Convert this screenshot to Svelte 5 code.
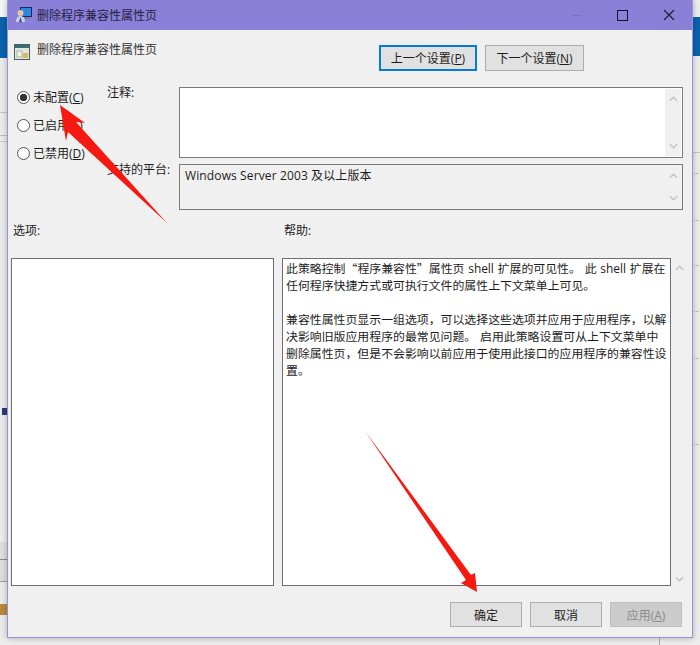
<script>
  let setting = 'none';

  const radios = [
    { id: 'none', text: '未配置', key: 'C' },
    { id: 'on', text: '已启用', key: 'E' },
    { id: 'off', text: '已禁用', key: 'D' }
  ];

  // the dotted rows of the list behind the dialog
  const dotRows = [173, 220, 265, 311, 358, 444];
</script>

<div class="desktop">
  <!-- bits of the windows behind the dialog -->
  <div class="behind top-left"></div>
  <div class="behind blue-left"></div>
  <div class="behind line-a"></div>
  <div class="behind line-d"></div>
  <div class="behind line-e"></div>
  <div class="behind band"></div>
  <div class="behind line-b"></div>
  <div class="behind line-c"></div>
  <div class="behind blue-right"></div>
  <div class="behind line-r"></div>
  {#each dotRows as y}
    <div class="behind dots" style="top: {y}px"></div>
  {/each}
  <div class="behind bottom-line"></div>
  <div class="behind mini-a"></div>
  <div class="behind mini-b"></div>

  <div class="window">
    <div class="titlebar">
      <svg class="title-icon" width="16" height="16" viewBox="0 0 16 16">
        <rect x="4" y="0" width="12" height="10" fill="#1b2a5e" />
        <rect x="5" y="1" width="10" height="8" fill="#2f86de" />
        <rect x="8" y="10" width="6" height="2" fill="#6f7f9c" />
        <circle cx="4.5" cy="6" r="3" fill="#e6c6a0" />
        <path d="M0 15c0-4 2-6 4.500-6s4.500 2 4.500 6z" fill="#c9d2e8" />
        <path d="M3 15l1.500-5 1.500 5z" fill="#2c4f9c" />
      </svg>
      <span class="title-text">删除程序兼容性属性页</span>
      <div class="controls">
        <span class="min"></span>
        <span class="max"></span>
        <svg width="12" height="12" viewBox="0 0 12 12">
          <path d="M1 1l10 10M11 1L1 11" stroke="#1c1c30" stroke-width="1.2" fill="none" />
        </svg>
      </div>
    </div>

    <div class="head">
      <svg class="head-icon" width="16" height="16" viewBox="0 0 16 16">
        <rect x="0.5" y="0.5" width="15" height="15" fill="#dfe6e4" stroke="#4d5c5c" />
        <rect x="1" y="1" width="14" height="3" fill="#3c6f73" />
        <rect x="3" y="7" width="5" height="6" fill="#f1efe0" stroke="#8b8f7a" stroke-width="0.6" />
        <rect x="9" y="9" width="5" height="5" fill="#d9b95f" />
      </svg>
      <span class="head-text">删除程序兼容性属性页</span>
      <div class="nav">
        <button class="btn focus">上一个设置(<u>P</u>)</button>
        <button class="btn">下一个设置(<u>N</u>)</button>
      </div>
    </div>

    <div class="config">
      <div class="radios">
        {#each radios as r}
          <label class="radio">
            <input type="radio" bind:group={setting} value={r.id} />
            <span class="dot"></span>
            <span>{r.text}(<u>{r.key}</u>)</span>
          </label>
        {/each}
      </div>
      <span class="field-label">注释:</span>
      <div class="box comment">
        <div class="scroll">
          <svg class="chev" viewBox="0 0 10 6"><path d="M1 5l4-4 4 4" /></svg>
          <svg class="chev" viewBox="0 0 10 6"><path d="M1 1l4 4 4-4" /></svg>
        </div>
      </div>
      <span class="field-label">支持的平台:</span>
      <div class="box platform">
        <p>Windows Server 2003 及以上版本</p>
        <div class="scroll">
          <svg class="chev" viewBox="0 0 10 6"><path d="M1 5l4-4 4 4" /></svg>
          <svg class="chev" viewBox="0 0 10 6"><path d="M1 1l4 4 4-4" /></svg>
        </div>
      </div>
    </div>

    <div class="pane-labels">
      <span>选项:</span>
      <span>帮助:</span>
    </div>

    <div class="panes">
      <div class="pane options"></div>
      <div class="pane help">
        <p>此策略控制<span class="quote">“</span>程序兼容性<span class="quote">”</span>属性页 shell 扩展的可见性。 此 shell 扩展在<br />任何程序快捷方式或可执行文件的属性上下文菜单上可见。</p>
        <p>兼容性属性页显示一组选项，可以选择这些选项并应用于应用程序，以解<br />决影响旧版应用程序的最常见问题。 启用此策略设置可从上下文菜单中<br />删除属性页，但是不会影响以前应用于使用此接口的应用程序的兼容性设<br />置。</p>
      </div>
      <div class="help-scroll">
        <svg class="chev" viewBox="0 0 10 6"><path d="M1 5l4-4 4 4" /></svg>
        <svg class="chev" viewBox="0 0 10 6"><path d="M1 1l4 4 4-4" /></svg>
      </div>
    </div>

    <div class="footer">
      <button class="btn wide">确定</button>
      <button class="btn wide">取消</button>
      <button class="btn wide disabled" disabled>应用(<u>A</u>)</button>
    </div>
  </div>

  <!-- red annotation arrows on top of the screenshot -->
  <svg class="arrows" width="700" height="645" viewBox="0 0 700 645">
    <path d="M60 105L85 123L76 122L167 223L68 132L66 141z" fill="#f5190f" />
    <path d="M365 431L471 575L475 573L477 592L461 583L466 580z" fill="#f5190f" />
  </svg>
</div>

<style>
  :global(body) {
    margin: 0;
    background: #f0f0f0;
  }

  .desktop {
    position: relative;
    width: 700px;
    height: 645px;
    padding-left: 7px;
    box-sizing: border-box;
    overflow: hidden;
    background: #ececec;
    font-family: "Open Sans", "Noto Sans CJK SC", sans-serif;
    font-size: 12px;
    color: #1c1c1c;
  }

  .behind {
    position: absolute;
  }

  .top-left {
    left: 0;
    top: 0;
    width: 7px;
    height: 17px;
    background: #f6f6f6;
  }

  .blue-left {
    left: 0;
    top: 17px;
    width: 7px;
    height: 41px;
    background: #0a64ad;
  }

  .blue-right {
    left: 693px;
    top: 17px;
    width: 7px;
    height: 39px;
    background: #0a64ad;
  }

  .line-r {
    left: 693px;
    top: 152px;
    width: 7px;
    height: 1px;
    background: #c4c4c4;
  }

  .dots {
    left: 694px;
    width: 6px;
    height: 1px;
    background: repeating-linear-gradient(90deg, #a8a8a8 0 1px, transparent 1px 2px);
  }

  .line-a {
    left: 0;
    top: 112px;
    width: 7px;
    height: 1px;
    background: #c4c4c4;
  }

  .line-d {
    left: 0;
    top: 135px;
    width: 7px;
    height: 1px;
    background: #bcbcbc;
  }

  .line-e {
    left: 0;
    top: 141px;
    width: 7px;
    height: 1px;
    background: #c8c8c8;
  }

  .band {
    left: 0;
    top: 542px;
    width: 7px;
    height: 39px;
    background: #dedede;
  }

  .line-b {
    left: 0;
    top: 559px;
    width: 7px;
    height: 1px;
    background: #8a8a8a;
  }

  .line-c {
    left: 0;
    top: 581px;
    width: 7px;
    height: 1px;
    background: #a0a0a0;
  }

  .bottom-line {
    left: 659px;
    top: 637px;
    width: 1px;
    height: 8px;
    background: #a8a8a8;
  }

  .mini-a {
    left: 2px;
    top: 408px;
    width: 5px;
    height: 7px;
    background: #2d3c78;
  }

  .mini-b {
    left: 0;
    top: 604px;
    width: 7px;
    height: 11px;
    background: #b98a3c;
  }

  .window {
    position: relative;
    width: 686px;
    height: 638px;
    box-sizing: border-box;
    border: 1px solid #9a92dc;
    border-top: 0;
    background: #f0f0f0;
    box-shadow: 0 0 6px rgba(0, 0, 0, 0.28);
    display: flex;
    flex-direction: column;
  }

  .titlebar {
    height: 30px;
    flex: none;
    background: #8a80d8;
    display: flex;
    align-items: center;
    padding-left: 8px;
    gap: 5px;
  }

  .title-text {
    color: #23233f;
    font-size: 12px;
  }

  .controls {
    margin-left: auto;
    display: flex;
    align-items: center;
    gap: 35px;
    padding-right: 17px;
  }

  .min {
    width: 10px;
    height: 1px;
    background: #7a72bd;
  }

  .max {
    width: 9px;
    height: 9px;
    border: 1px solid #12122a;
  }

  .head {
    height: 57px;
    flex: none;
    display: flex;
    align-items: flex-start;
    padding-left: 6px;
    padding-right: 108px;
  }

  .head-icon {
    margin-top: 14px;
  }

  .head-text {
    margin-left: 7px;
    margin-top: 11px;
    line-height: 17px;
    color: #333;
  }

  .nav {
    margin-left: auto;
    margin-top: 15px;
    display: flex;
    gap: 8px;
  }

  .btn {
    width: 99px;
    height: 26px;
    padding: 0;
    box-sizing: border-box;
    border: 1px solid #adadad;
    background: #e1e1e1;
    font: inherit;
    color: #1c1c1c;
  }

  .btn.focus {
    width: 98px;
    border: 2px solid #0a78d7;
  }

  .btn.wide {
    width: 72px;
    height: 25px;
  }

  .btn.disabled {
    background: #cccccc;
    border-color: #bfbfbf;
    color: #8a8a8a;
  }

  .config {
    flex: none;
    display: grid;
    grid-template-columns: 90px 72px 504px;
    grid-template-rows: 71px 46px;
    row-gap: 6px;
    padding-left: 9px;
  }

  .radios {
    grid-row: 1 / 3;
    grid-column: 1;
    display: flex;
    flex-direction: column;
    gap: 11px;
    padding-top: 2px;
  }

  .radio {
    display: flex;
    align-items: center;
    gap: 3px;
    height: 17px;
    line-height: 17px;
  }

  .radio input {
    display: none;
  }

  .dot {
    width: 13px;
    height: 13px;
    box-sizing: border-box;
    border: 1px solid #555;
    border-radius: 50%;
    background: #fff;
    flex: none;
  }

  .radio input:checked + .dot {
    background: radial-gradient(circle, #333 0 3.4px, #fff 4px);
  }

  .field-label {
    grid-column: 2;
    margin-top: -3px;
    line-height: 17px;
  }

  .box {
    grid-column: 3;
    box-sizing: border-box;
    border: 1px solid #7a7a7a;
    position: relative;
    display: flex;
    justify-content: flex-end;
  }

  .comment {
    background: #fff;
  }

  .platform {
    background: #f0f0f0;
  }

  .platform p {
    margin: 2px auto 0 5px;
    line-height: 17px;
    letter-spacing: 0.12px;
  }

  .scroll {
    width: 16px;
    margin: 1px;
    background: #f0f0f0;
    display: flex;
    flex-direction: column;
    justify-content: space-between;
    align-items: center;
    padding: 7px 0;
    box-sizing: border-box;
  }

  .chev {
    width: 9px;
    height: 6px;
    display: block;
  }

  .chev path {
    fill: none;
    stroke: #c2c2c2;
    stroke-width: 1.5;
  }

  .pane-labels {
    height: 48px;
    flex: none;
    display: flex;
    padding: 12px 0 0 5px;
    box-sizing: border-box;
    line-height: 17px;
  }

  .pane-labels span:first-child {
    width: 271px;
  }

  .panes {
    height: 328px;
    flex: none;
    display: flex;
    padding-left: 3px;
    gap: 8px;
  }

  .pane {
    box-sizing: border-box;
    background: #fff;
    border: 1px solid #6f6f6f;
  }

  .options {
    width: 263px;
  }

  .help {
    width: 389px;
    padding: 0 3px;
    font-size: 11.9px;
    line-height: 17px;
    word-spacing: 0.7px;
    white-space: nowrap;
    overflow: hidden;
  }

  .help p {
    margin: 0 0 17px;
  }

  .quote {
    font-family: "Noto Sans CJK SC", sans-serif;
    font-feature-settings: "fwid";
  }

  .help-scroll {
    margin-left: -8px;
    width: 16px;
    display: flex;
    flex-direction: column;
    justify-content: space-between;
    align-items: center;
    padding: 7px 0 4px;
    box-sizing: border-box;
  }

  .footer {
    flex: none;
    display: flex;
    justify-content: flex-end;
    gap: 8px;
    padding: 16px 10px 0 0;
  }

  .arrows {
    position: absolute;
    left: 0;
    top: 0;
    pointer-events: none;
  }
</style>
